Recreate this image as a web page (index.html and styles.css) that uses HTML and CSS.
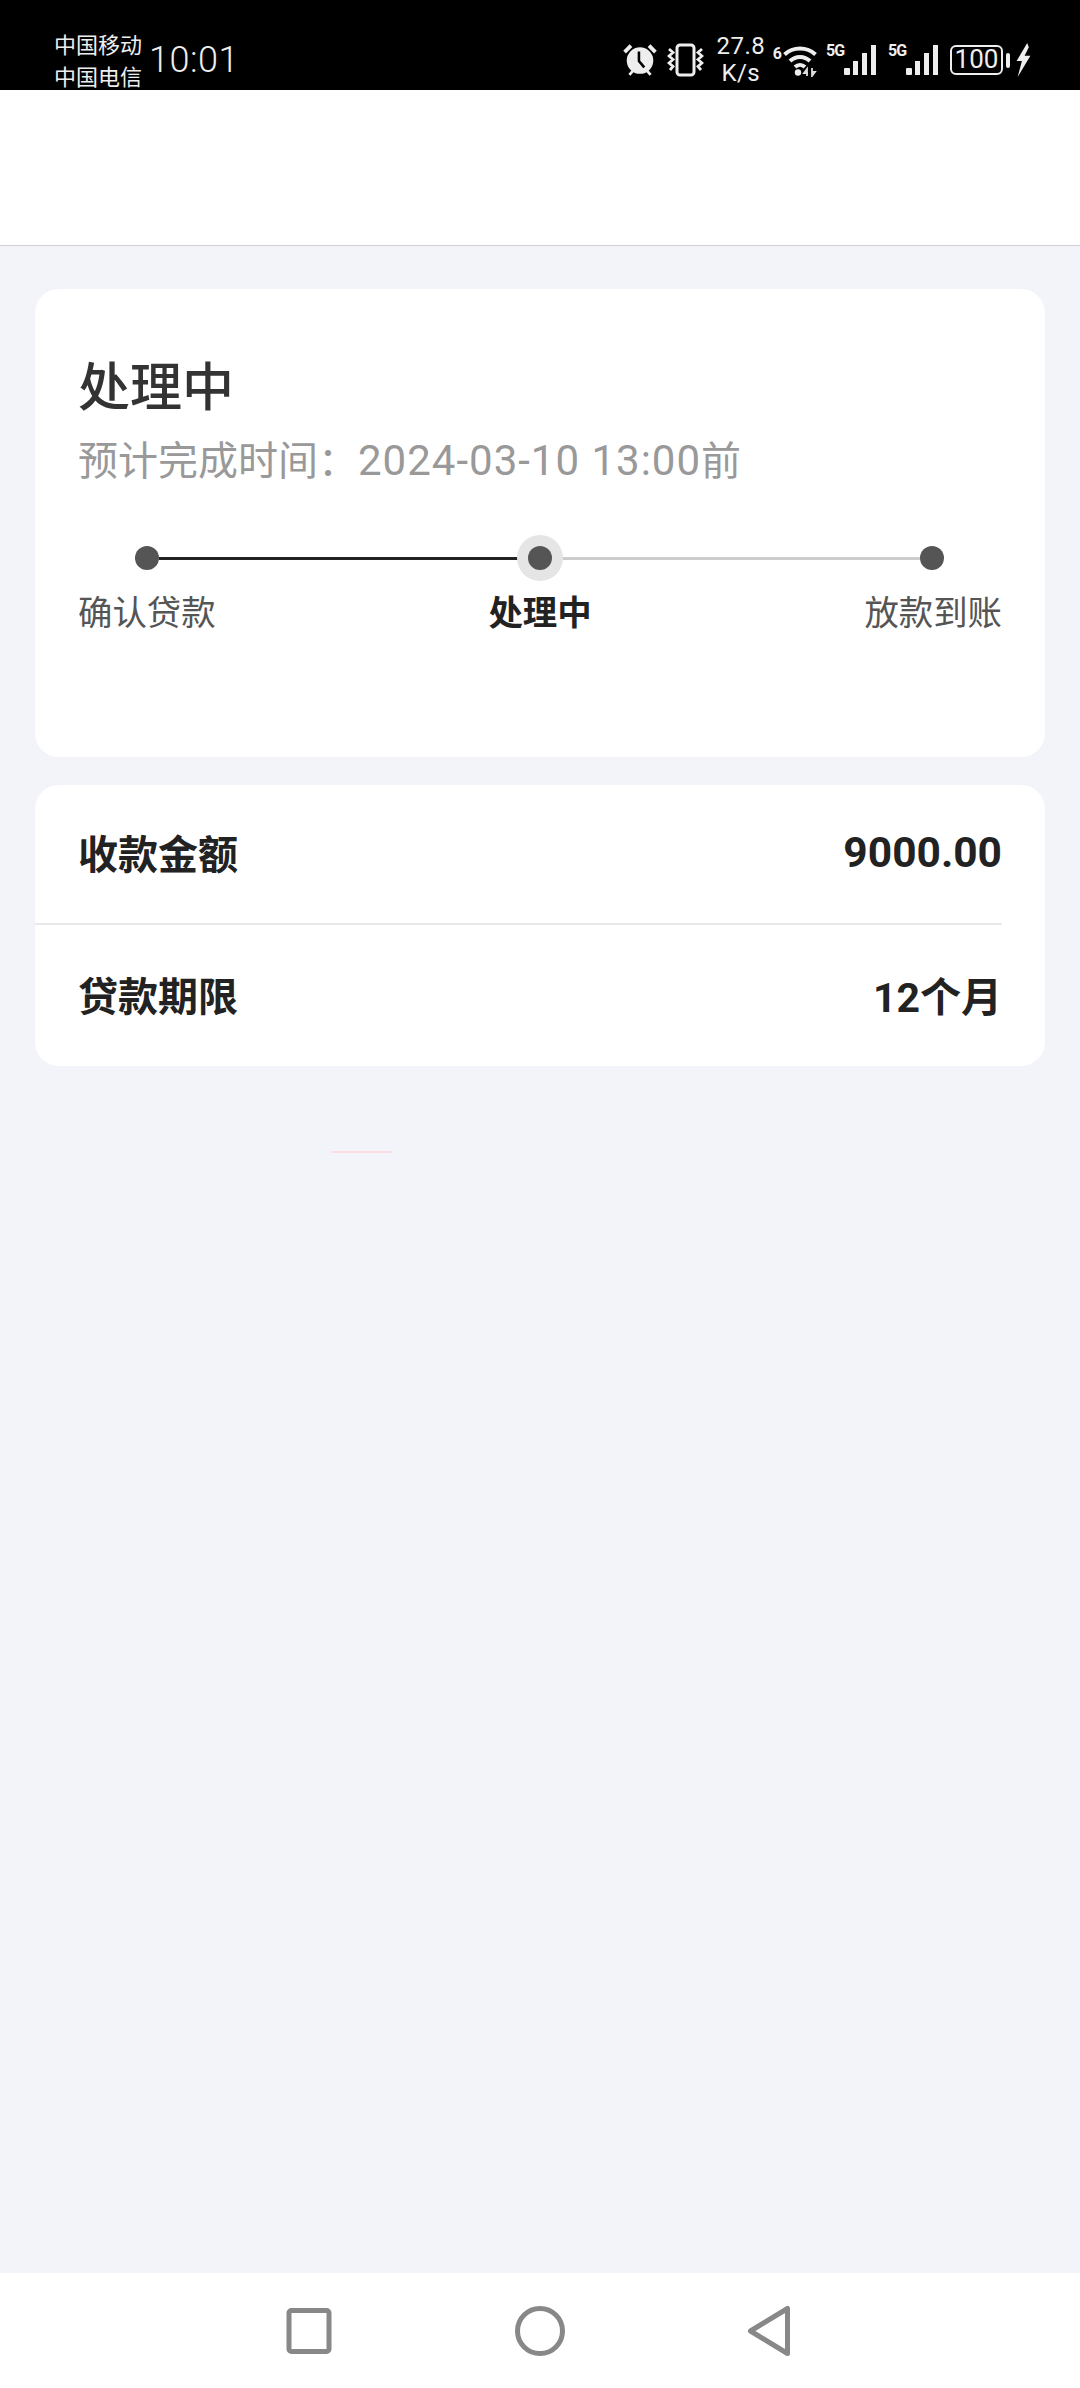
FILE: index.html
```html
<!DOCTYPE html>
<html lang="zh-CN">
<head>
<meta charset="utf-8">
<title>处理中</title>
<link rel="stylesheet" href="styles.css">
</head>
<body>
<div class="screen">
  <header class="status">
    <div class="carriers"><span>中国移动</span><span>中国电信</span></div>
    <div class="clock">10:01</div>
    <div class="status-right">
      <svg class="ic-alarm" width="34" height="34" viewBox="0 0 32 32">
        <circle cx="16" cy="16.5" r="12.500" fill="#eee"/>
        <path d="M15 8v9l5 6" fill="none" stroke="#000" stroke-width="2.400"/>
        <path d="M1.500 8.500 7.500 2.500M30.500 8.500 24.500 2.500" stroke="#eee" stroke-width="3.600"/>
        <path d="M6 30l3.500-4M26 30l-3.500-4" stroke="#eee" stroke-width="2.600"/>
      </svg>
      <svg class="ic-vibrate" width="37" height="34" viewBox="0 0 37 34">
        <rect x="10" y="2" width="17" height="30" rx="3" fill="none" stroke="#eee" stroke-width="3"/>
        <path d="M2 6l4 3.500-4 3.500 4 3.500-4 3.500 4 3.500-3 3.500M35 6l-4 3.500 4 3.500-4 3.500 4 3.500-4 3.500 3 3.500" fill="none" stroke="#eee" stroke-width="2.800"/>
      </svg>
      <div class="speed"><span>27.8</span><span>K/s</span></div>
      <div class="wifi-wrap">
        <span class="tiny six">6</span>
        <svg width="34" height="34" viewBox="0 0 34 34">
          <path d="M1.500 11.500C10 3.500 24 3.500 32.500 11.500M7 18C12.500 12.500 21.500 12.500 27 18M12 24c3-2.800 7-2.800 10 0" fill="none" stroke="#eee" stroke-width="4"/>
          <circle cx="15" cy="29.500" r="3.200" fill="#eee"/>
          <path d="M24 33v-7l-3 4h4M29 25v8l3-4h-3" fill="none" stroke="#ddd" stroke-width="1.800"/>
        </svg>
      </div>
      <div class="sim">
        <span class="tiny">5G</span>
        <svg width="33" height="32" viewBox="0 0 33 32">
          <rect x="0" y="24" width="6" height="7" rx="1" fill="#eee"/>
          <rect x="9" y="17" width="5" height="14" fill="#eee"/>
          <rect x="18" y="9" width="5" height="22" fill="#eee"/>
          <rect x="27" y="1" width="5" height="30" fill="#eee"/>
        </svg>
      </div>
      <div class="sim">
        <span class="tiny">5G</span>
        <svg width="33" height="32" viewBox="0 0 33 32">
          <rect x="0" y="24" width="6" height="7" rx="1" fill="#eee"/>
          <rect x="9" y="17" width="5" height="14" fill="#eee"/>
          <rect x="18" y="9" width="5" height="22" fill="#eee"/>
          <rect x="27" y="1" width="5" height="30" fill="#eee"/>
        </svg>
      </div>
      <div class="battery"><span class="battery-body">100</span><span class="battery-nub"></span></div>
      <svg class="ic-bolt" width="17" height="34" viewBox="0 0 15 32">
        <path d="M11 0 1 17h5L2 32 14 12H8.500l4-8z" fill="#eee"/>
      </svg>
    </div>
  </header>

  <div class="appbar"></div>

  <main class="content">
    <section class="card progress">
      <h1 class="title">处理中</h1>
      <p class="eta">预计完成时间：<span class="eta-time">2024-03-10 13:00</span>前</p>
      <div class="track">
        <span class="dot"></span>
        <span class="line line-done"></span>
        <span class="dot dot-active"></span>
        <span class="line"></span>
        <span class="dot"></span>
      </div>
      <div class="labels">
        <span>确认贷款</span>
        <span class="label-active">处理中</span>
        <span>放款到账</span>
      </div>
    </section>

    <section class="card details">
      <div class="row row-first"><span>收款金额</span><span class="amount">9000.00</span></div>
      <div class="row"><span>贷款期限</span><span class="term">12个月</span></div>
    </section>

    <div class="smudge"></div>
  </main>

  <nav class="navbar">
    <svg width="50" height="50" viewBox="0 0 50 50"><rect x="5" y="4.500" width="40" height="41" rx="2.500" fill="none" stroke="#888" stroke-width="5"/></svg>
    <svg width="52" height="52" viewBox="0 0 52 52"><circle cx="26" cy="26" r="22.500" fill="none" stroke="#888" stroke-width="5"/></svg>
    <svg width="50" height="52" viewBox="0 0 50 52"><path d="M41.500 3.500V48.500L4.500 26z" fill="none" stroke="#888" stroke-width="5" stroke-linejoin="round"/></svg>
  </nav>
</div>
</body>
</html>
```

FILE: styles.css
```css
* { box-sizing: border-box; }
html, body { margin: 0; padding: 0; }
body {
  width: 1080px;
  height: 2388px;
  overflow: hidden;
  font-family: Roboto, "Noto Sans CJK SC", sans-serif;
  background: #f2f4f9;
}
.screen { display: flex; flex-direction: column; height: 2388px; }

/* status bar */
.status {
  height: 90px;
  flex: none;
  overflow: hidden;
  background: #000;
  color: #eee;
  display: flex;
  align-items: flex-end;
  padding: 0 48px 0 54px;
}
.carriers {
  display: flex;
  flex-direction: column;
  font-size: 22px;
  line-height: 31.500px;
  width: 95px;
  margin-bottom: -3px;
}
.clock {
  font-size: 36px;
  line-height: 40px;
  letter-spacing: 0.5px;
  font-weight: 300;
  margin: 0 0 10px 0;
}
.status-right {
  margin-left: auto;
  height: 90px;
  display: flex;
  align-items: center;
  padding-top: 30px;
}
.ic-alarm { margin-right: 10px; }
.ic-vibrate { margin-right: 13px; }
.speed {
  display: flex;
  flex-direction: column;
  align-items: center;
  font-size: 24px;
  line-height: 27px;
  width: 48px;
  letter-spacing: 0.5px;
  margin-top: -1px;
  margin-right: 8px;
}
.tiny { font-size: 16px; line-height: 14px; font-weight: 700; letter-spacing: -1px; }
.wifi-wrap { display: flex; align-items: flex-start; height: 34px; margin-right: 9px; }
.six { font-size: 16px; margin: 4px 1px 0 0; letter-spacing: 0; }
.sim { display: flex; align-items: flex-start; height: 32px; margin-right: 11px; }
.sim .tiny { width: 18px; }
.battery { display: flex; align-items: center; margin-right: 5px; }
.battery-body {
  width: 53px;
  height: 30px;
  border: 2.500px solid #eee;
  border-radius: 6px;
  font-size: 26px;
  line-height: 25px;
  text-align: center;
}
.battery-nub {
  width: 4px;
  height: 15px;
  margin-left: 3px;
  background: #eee;
  border-radius: 2px;
}

.appbar {
  height: 156px;
  flex: none;
  background: #fff;
  border-bottom: 1px solid #cfd1d3;
}

/* content */
.content {
  flex: 1;
  padding: 43px 35px 0;
  display: flex;
  flex-direction: column;
}
.card { background: #fff; border-radius: 24px; }
.progress { height: 468px; padding: 71px 43px 0 43px; }
.title {
  margin: 0;
  font-size: 52px;
  line-height: 58px;
  font-weight: 500;
  color: #333;
}
.eta {
  margin: 18px 0 0;
  font-size: 40px;
  line-height: 50px;
  color: #999;
}
.eta-time { font-size: 42px; letter-spacing: 1px; }
.track {
  display: flex;
  align-items: center;
  height: 46px;
  margin: 48px 58px 0 57px;
}
.dot {
  flex: none;
  width: 24px;
  height: 24px;
  border-radius: 50%;
  background: #555;
}
.dot-active { box-shadow: 0 0 0 11px #e5e5e5; position: relative; }
.line { flex: 1; height: 3px; background: #ccc; }
.line-done { background: #222; }
.labels {
  display: flex;
  justify-content: space-between;
  margin-top: 9px;
  font-size: 34.400px;
  line-height: 46px;
  color: #555;
}
.label-active { color: #222; font-weight: 700; }

.details { margin-top: 28px; padding-right: 43px; height: 281px; }
.row {
  height: 140px;
  padding: 0 0 4px 43px;
  display: flex;
  justify-content: space-between;
  align-items: center;
  font-size: 40px;
  font-weight: 700;
  color: #222;
}
.row-first { border-bottom: 2px solid #e8e9eb; }
.row + .row { padding-bottom: 2px; }
.amount { font-size: 42.500px; }
.term { font-size: 41px; }

.smudge {
  width: 60px;
  height: 2px;
  margin: 85px 0 0 297px;
  background: #fbdde0;
}

/* navigation bar */
.navbar {
  height: 115px;
  flex: none;
  background: #fff;
  display: flex;
  align-items: center;
  padding: 0 0 0 284px;
  gap: 180px;
}
```
